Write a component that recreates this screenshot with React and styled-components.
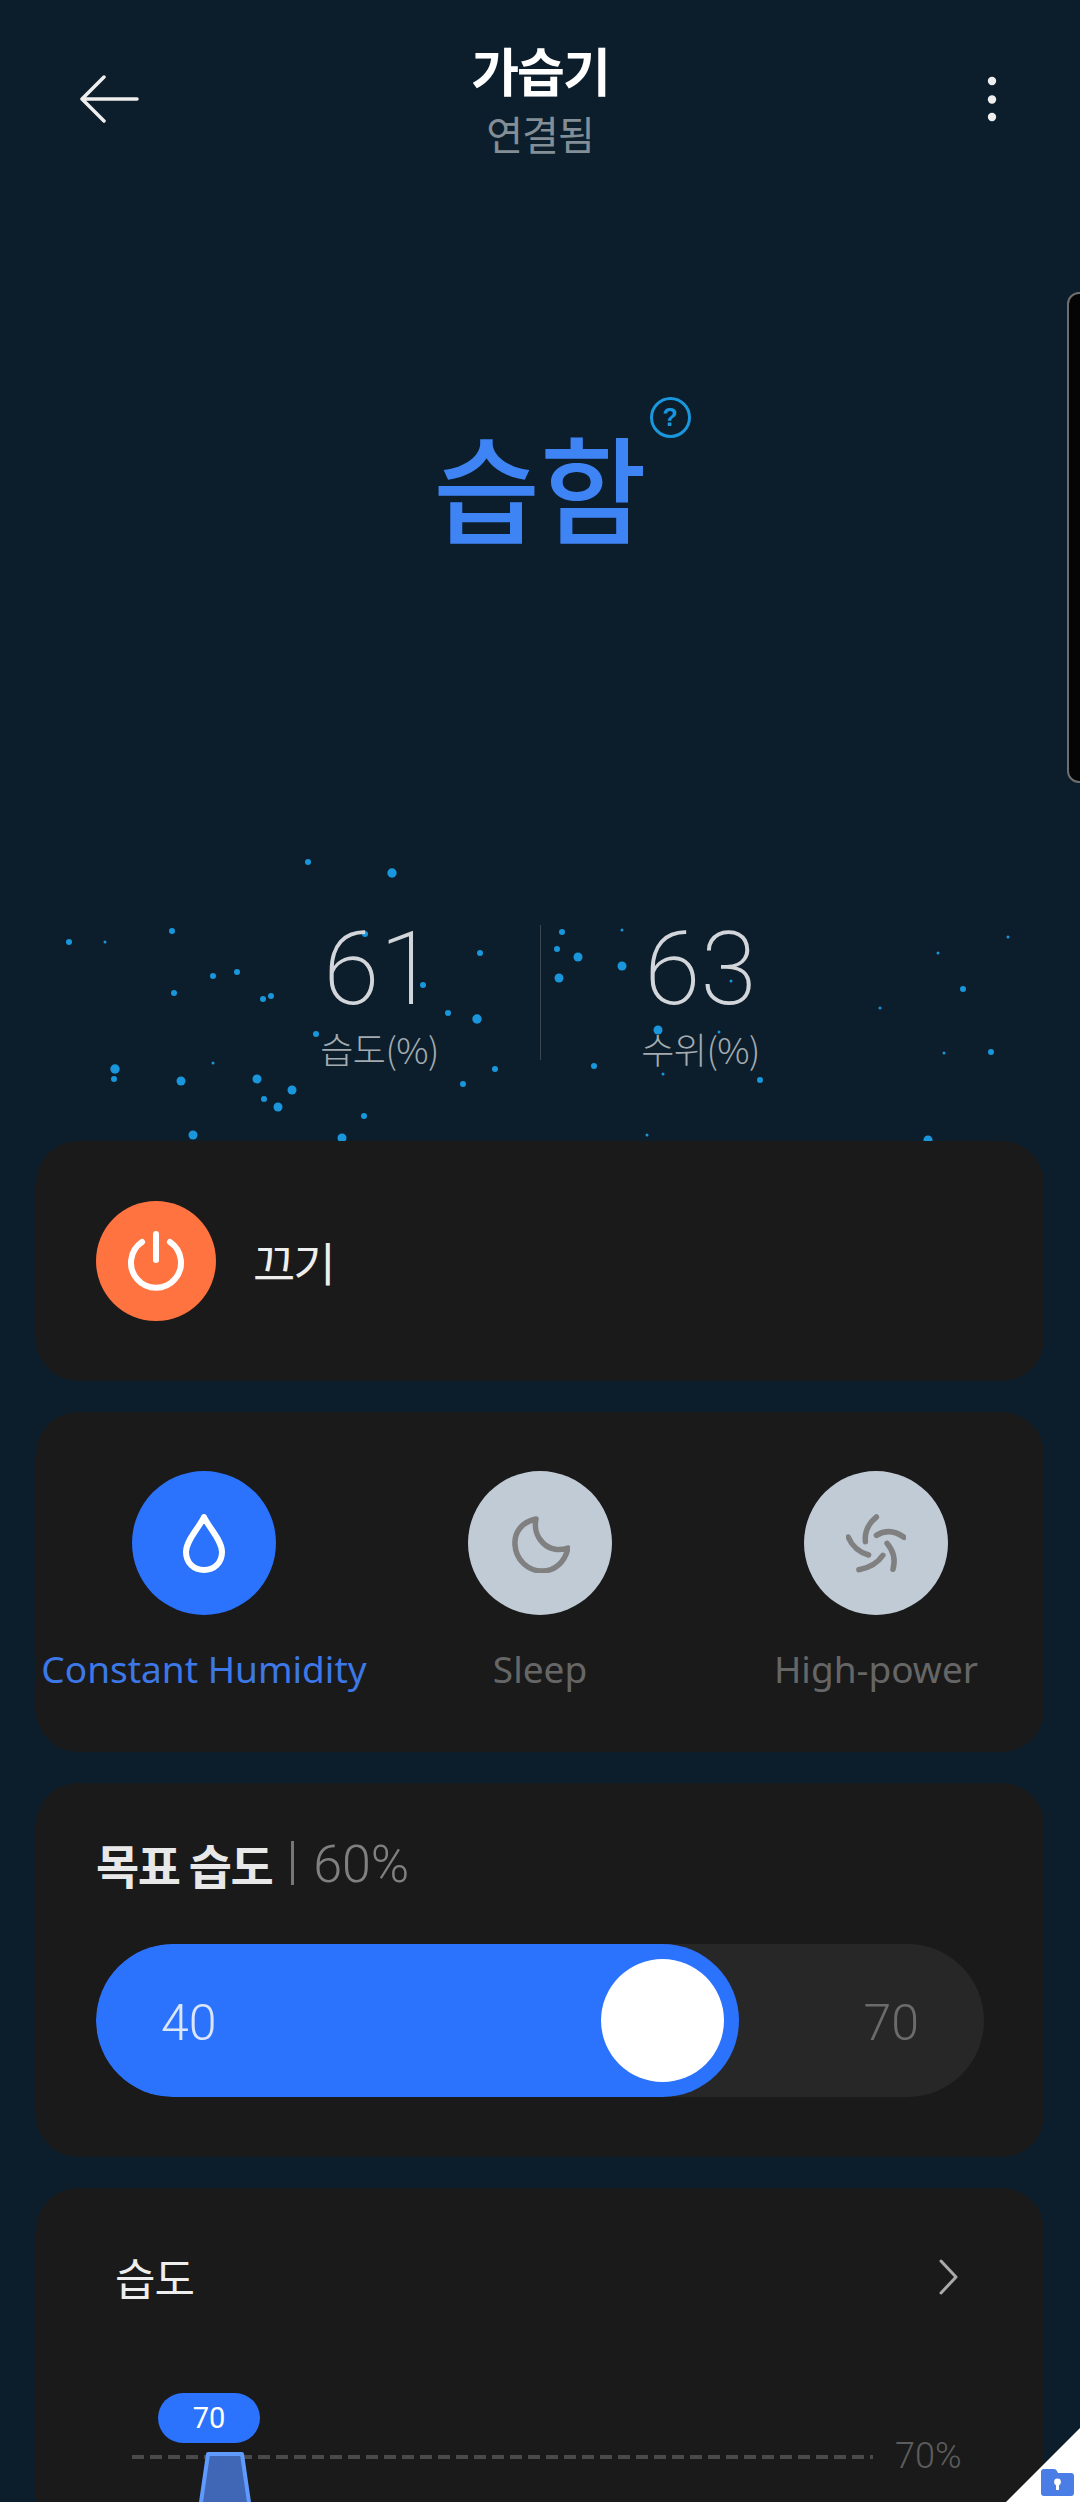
import React from "react";
import styled, { createGlobalStyle } from "styled-components";

const KR = `"Noto Sans CJK KR", "Noto Sans", sans-serif`;
const DIGITS = `"Roboto", "Lato", sans-serif`;

const GlobalStyle = createGlobalStyle`
  html, body {
    margin: 0;
    padding: 0;
    background: #0c1e2b;
  }
  * {
    box-sizing: border-box;
  }
`;

const Page = styled.div`
  position: relative;
  width: 1080px;
  height: 2502px;
  overflow: hidden;
  background: #0c1e2b;
  font-family: ${KR};
  display: flex;
  flex-direction: column;
  > * {
    flex-shrink: 0;
  }
`;

/* header */
const Header = styled.header`
  height: 170px;
  padding: 0 80px;
  display: flex;
  align-items: flex-start;
  justify-content: space-between;
`;
const IconSlot = styled.div`
  width: 60px;
  height: 60px;
  margin-top: 69px;
  padding-right: ${(p) => (p.$end ? "3px" : "0")};
  display: flex;
  align-items: center;
  justify-content: ${(p) => (p.$end ? "flex-end" : "flex-start")};
`;
const HeaderTitle = styled.div`
  display: flex;
  flex-direction: column;
  align-items: center;
  padding-top: 38px;
`;
const DeviceName = styled.h1`
  margin: 0;
  font-size: 52px;
  line-height: 64px;
  font-weight: 700;
  color: #fff;
  letter-spacing: -2px;
`;
const DeviceStatus = styled.span`
  margin-top: 8px;
  font-size: 40px;
  line-height: 46px;
  font-weight: 400;
  color: #838e96;
  letter-spacing: -1px;
`;

/* hero */
const Hero = styled.section`
  height: 670px;
  display: flex;
  justify-content: center;
  padding-top: 239px;
`;
const HeroLabel = styled.div`
  position: relative;
  height: 150px;
  font-size: 116px;
  line-height: 150px;
  font-weight: 500;
  color: #3f84f5;
  letter-spacing: 0;
`;
const HelpBadge = styled.span`
  position: absolute;
  top: -12px;
  right: -44px;
  width: 41px;
  height: 41px;
  border: 3px solid #1a96dc;
  border-radius: 50%;
  display: flex;
  align-items: center;
  justify-content: center;
  font-family: "Liberation Sans", sans-serif;
  font-size: 25px;
  line-height: 1;
  font-weight: 700;
  letter-spacing: 0;
  color: #1a96dc;
`;

/* readings */
const Stats = styled.section`
  position: relative;
  height: 301px;
  display: flex;
  justify-content: center;
  padding-top: 74px;
`;
const Particles = styled.svg`
  position: absolute;
  left: 0;
  top: 0;
  width: 1080px;
  height: 301px;
`;
const Stat = styled.div`
  position: relative;
  width: 320px;
  display: flex;
  flex-direction: column;
  align-items: center;
`;
const StatValue = styled.div`
  font-family: ${DIGITS};
  font-size: 102px;
  line-height: 110px;
  font-weight: 200;
  color: #d2d6da;
`;
const StatLabel = styled.div`
  margin-top: 1px;
  font-size: 36px;
  line-height: 46px;
  font-weight: 300;
  color: #a3abb1;
  letter-spacing: -0.5px;
`;
const Divider = styled.div`
  position: relative;
  width: 1px;
  height: 135px;
  margin-top: 11px;
  background: #3a4650;
`;

/* cards */
const Cards = styled.main`
  position: relative;
  padding: 0 36px;
  display: flex;
  flex-direction: column;
  gap: 31px;
  > * {
    flex-shrink: 0;
  }
`;
const Card = styled.section`
  height: ${(p) => p.$h}px;
  border-radius: 42px;
  background: #1a1a1a;
`;

const PowerRow = styled(Card)`
  padding: 0 60px;
  display: flex;
  align-items: center;
  gap: 37px;
`;
const PowerButton = styled.div`
  width: 120px;
  height: 120px;
  border-radius: 50%;
  background: #ff7340;
  display: flex;
  align-items: center;
  justify-content: center;
`;
const PowerLabel = styled.span`
  font-size: 46px;
  font-weight: 400;
  color: #eee;
  letter-spacing: -2px;
`;

const ModeRow = styled(Card)`
  display: grid;
  grid-template-columns: repeat(3, 336px);
  padding-top: 59px;
`;
const Mode = styled.div`
  display: flex;
  flex-direction: column;
  align-items: center;
  gap: 28px;
`;
const ModeIcon = styled.div`
  width: 144px;
  height: 144px;
  border-radius: 50%;
  display: flex;
  align-items: center;
  justify-content: center;
  background: ${(p) => (p.$active ? "#2b72fd" : "#c0cbd6")};
`;
const ModeLabel = styled.span`
  font-family: "Noto Sans", sans-serif;
  font-size: 37px;
  line-height: 52px;
  color: ${(p) => (p.$active ? "#3d78e8" : "#666")};
  white-space: nowrap;
`;

const TargetCard = styled(Card)`
  padding: 52px 60px 0;
`;
const TargetTitle = styled.div`
  height: 56px;
  display: flex;
  align-items: center;
  font-size: 47px;
  font-weight: 700;
  color: #e8e8e8;
  letter-spacing: -1.5px;
`;
const TargetValue = styled.span`
  margin-left: 19px;
  padding: 3px 0 0 19px;
  border-left: 3px solid #777;
  font-family: ${DIGITS};
  font-size: 52px;
  line-height: 41px;
  font-weight: 300;
  letter-spacing: 0;
  color: #808080;
`;
const Track = styled.div`
  position: relative;
  margin-top: 53px;
  width: 888px;
  height: 153px;
  padding: 4px 65px 0;
  border-radius: 77px;
  background: #272727;
  display: flex;
  align-items: center;
  justify-content: space-between;
  overflow: hidden;
`;
const TrackFill = styled.div`
  position: absolute;
  left: 0;
  top: 0;
  height: 100%;
  border-radius: 77px;
  background: #2b72fd;
`;
const Thumb = styled.div`
  position: absolute;
  right: 15px;
  top: 15px;
  width: 123px;
  height: 123px;
  border-radius: 50%;
  background: #fff;
`;
const TrackNum = styled.span`
  position: relative;
  font-family: ${DIGITS};
  font-size: 50px;
  font-weight: 300;
  color: ${(p) => (p.$on ? "#dbe6fb" : "#6b6b6b")};
`;

const HistoryCard = styled(Card)`
  padding: 56px 85px 0 79px;
`;
const HistoryHead = styled.div`
  display: flex;
  align-items: center;
  justify-content: space-between;
  height: 66px;
`;
const HistoryTitle = styled.span`
  font-size: 44px;
  font-weight: 400;
  color: #eee;
  letter-spacing: -1px;
`;
const Chart = styled.div`
  position: relative;
  margin: 83px 0 0 17px;
  height: 120px;
  display: flex;
  align-items: flex-start;
  gap: 22px;
`;
const GoalLine = styled.div`
  flex: none;
  width: 741px;
  height: 4px;
  margin-top: 62px;
  background: repeating-linear-gradient(90deg, #4a4a4a 0 12px, transparent 12px 18px);
`;
const GoalLabel = styled.span`
  flex: none;
  margin-top: 40px;
  font-family: ${DIGITS};
  font-size: 36px;
  line-height: 46px;
  font-weight: 300;
  color: #5c5c5c;
`;
const Bubble = styled.div`
  position: absolute;
  left: 26px;
  top: 0;
  width: 102px;
  height: 50px;
  border-radius: 25px;
  background: #2b72fd;
  color: #fff;
  font-family: ${DIGITS};
  font-size: 29px;
  line-height: 50px;
  text-align: center;
`;
const BarMark = styled.svg`
  position: absolute;
  left: 64px;
  top: 59px;
`;

/* overlays */
const ScrollHandle = styled.div`
  position: absolute;
  left: 1067px;
  top: 292px;
  width: 20px;
  height: 491px;
  border: 2px solid #6e6e6e;
  border-radius: 12px 0 0 12px;
  background: #050505;
`;
const CornerTag = styled.div`
  position: absolute;
  right: 0;
  bottom: 0;
  width: 74px;
  height: 74px;
  background: #fff;
  clip-path: polygon(100% 0, 100% 100%, 0 100%);
`;
const CornerIcon = styled.svg`
  position: absolute;
  right: 6px;
  bottom: 6px;
`;

const DOTS = [
  [308, 862, 3], [392, 873, 4.7], [172, 931, 3], [69, 942, 3], [105, 942, 1.5],
  [480, 953, 3], [213, 976, 3], [237, 972, 3], [174, 993, 3], [263, 999, 3],
  [271, 996, 3], [423, 985, 3], [365, 934, 3], [448, 1013, 3], [477, 1019, 4.7],
  [316, 1034, 3], [115, 1069, 4.7], [114, 1079, 3], [181, 1081, 4.5], [213, 1063, 1.5],
  [257, 1079, 4.5], [292, 1090, 4.5], [264, 1099, 3], [278, 1107, 4.5], [364, 1116, 3],
  [495, 1069, 3], [463, 1084, 3], [193, 1135, 4.5], [342, 1138, 4.5], [562, 932, 3],
  [622, 930, 1.5], [557, 949, 3], [578, 957, 4.5], [559, 978, 4.5], [622, 966, 4.5],
  [731, 981, 1.5], [658, 1030, 4.5], [719, 1032, 1.5], [594, 1066, 3], [663, 1074, 1.5],
  [760, 1080, 3], [1008, 937, 1.5], [938, 953, 1.5], [963, 989, 3], [880, 1008, 1.5],
  [944, 1053, 1.5], [991, 1052, 3], [647, 1135, 1.5], [928, 1140, 4.5],
];

const BackIcon = () => (
  <svg width="60" height="60" viewBox="0 0 60 60" fill="none" stroke="#eee" strokeWidth="3.5" strokeLinecap="round" strokeLinejoin="round">
    <path d="M3 30H57M24 8L2 30L24 52" />
  </svg>
);

const MoreIcon = () => (
  <svg width="10" height="48" viewBox="0 0 10 48" fill="#eee">
    <circle cx="5" cy="6" r="4.2" />
    <circle cx="5" cy="24.5" r="4.2" />
    <circle cx="5" cy="42" r="4.2" />
  </svg>
);

const PowerIcon = () => (
  <svg width="60" height="60" viewBox="0 0 60 60" fill="none" stroke="#fff" strokeWidth="6" strokeLinecap="round">
    <path d="M30 3V29M16 11A25 25 0 1 0 44 11" />
  </svg>
);

const DropIcon = () => (
  <svg width="60" height="60" viewBox="0 0 60 60" fill="none" stroke="#fff" strokeWidth="6" strokeLinejoin="round">
    <path d="M30 4C25 15 12 27 12 39C12 50 20 57 30 57C40 57 48 50 48 39C48 27 35 15 30 4Z" />
  </svg>
);

const MoonIcon = () => (
  <svg width="60" height="60" viewBox="0 0 60 60" fill="none" stroke="#808080" strokeWidth="5.5" strokeLinejoin="round">
    <path d="M26 6C12 9 4 19 5 32C6 47 18 58 32 58C45 58 55 49 58 35C50 38 40 37 33 30C27 24 24 15 26 6Z" />
  </svg>
);

const FanIcon = () => (
  <svg width="60" height="60" viewBox="0 0 60 60" fill="none" stroke="#808080" strokeWidth="5.5" strokeLinecap="round">
    <path d="M30.4 4Q18 14 19.4 28.7" />
    <path d="M30.4 22.3Q44 14 58 24.3" />
    <path d="M41 30.3Q51 42 47 56.3" />
    <path d="M36.9 42.3Q29 54 12.9 56.7" />
    <path d="M2.2 24Q8 38 22.6 42" />
  </svg>
);

const ChevronIcon = () => (
  <svg width="20" height="36" viewBox="0 0 20 36" fill="none" stroke="#aaa" strokeWidth="3" strokeLinecap="round" strokeLinejoin="round">
    <path d="M2 2L17 18L2 34" />
  </svg>
);

const modes = [
  { label: "Constant Humidity", icon: <DropIcon />, active: true },
  { label: "Sleep", icon: <MoonIcon /> },
  { label: "High-power", icon: <FanIcon /> },
];

export default function App() {
  return (
    <Page>
      <GlobalStyle />
      <Header>
        <IconSlot>
          <BackIcon />
        </IconSlot>
        <HeaderTitle>
          <DeviceName>가습기</DeviceName>
          <DeviceStatus>연결됨</DeviceStatus>
        </HeaderTitle>
        <IconSlot $end>
          <MoreIcon />
        </IconSlot>
      </Header>

      <Hero>
        <HeroLabel>
          습함
          <HelpBadge>?</HelpBadge>
        </HeroLabel>
      </Hero>

      <Stats>
        <Particles viewBox="0 840 1080 301">
          {DOTS.map(([x, y, r]) => (
            <circle key={`${x}-${y}`} cx={x} cy={y} r={r} fill="#1a96dc" />
          ))}
        </Particles>
        <Stat>
          <StatValue>61</StatValue>
          <StatLabel>습도(%)</StatLabel>
        </Stat>
        <Divider />
        <Stat>
          <StatValue>63</StatValue>
          <StatLabel>수위(%)</StatLabel>
        </Stat>
      </Stats>

      <Cards>
        <PowerRow $h={240}>
          <PowerButton>
            <PowerIcon />
          </PowerButton>
          <PowerLabel>끄기</PowerLabel>
        </PowerRow>

        <ModeRow $h={340}>
          {modes.map((m) => (
            <Mode key={m.label}>
              <ModeIcon $active={m.active}>{m.icon}</ModeIcon>
              <ModeLabel $active={m.active}>{m.label}</ModeLabel>
            </Mode>
          ))}
        </ModeRow>

        <TargetCard $h={374}>
          <TargetTitle>
            목표 습도
            <TargetValue>60%</TargetValue>
          </TargetTitle>
          <Track>
            <TrackFill style={{ width: `${153 + ((60 - 40) / (70 - 40)) * 735}px` }}>
              <Thumb />
            </TrackFill>
            <TrackNum $on>40</TrackNum>
            <TrackNum>70</TrackNum>
          </Track>
        </TargetCard>

        <HistoryCard $h={400}>
          <HistoryHead>
            <HistoryTitle>습도</HistoryTitle>
            <ChevronIcon />
          </HistoryHead>
          <Chart>
            <GoalLine />
            <GoalLabel>70%</GoalLabel>
            <Bubble>70</Bubble>
            <BarMark width="60" height="64" viewBox="0 0 60 64">
              <path d="M12 2H46L55 64H3Z" fill="#4067b5" stroke="#5f9bff" strokeWidth="4" strokeLinejoin="round" />
            </BarMark>
          </Chart>
        </HistoryCard>
      </Cards>

      <ScrollHandle />
      <CornerTag />
      <CornerIcon width="33" height="27" viewBox="0 0 33 27">
        <path d="M0 3Q0 0 3 0H13Q15 0 16 2L17 4H30Q33 4 33 7V24Q33 27 30 27H3Q0 27 0 24Z" fill="#4b7de6" />
        <circle cx="16.5" cy="13" r="3.4" fill="#fff" />
        <rect x="15" y="14" width="3" height="7" fill="#fff" />
      </CornerIcon>
    </Page>
  );
}
